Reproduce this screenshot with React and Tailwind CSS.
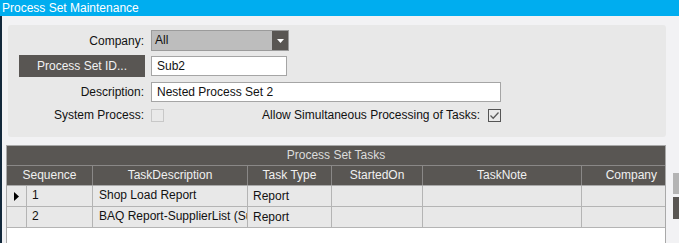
import React from "react";

const cols = [
  { key: "seq", w: "w-[66px]" },
  { key: "desc", w: "w-[155px]" },
  { key: "type", w: "w-[84px]" },
  { key: "started", w: "w-[91px]" },
  { key: "note", w: "w-[159px]" },
  { key: "company", w: "w-[83px]" },
];

const rows = [
  { seq: "1", desc: "Shop Load Report", type: "Report", current: true },
  { seq: "2", desc: "BAQ Report-SupplierList (Supplier List)", type: "Report" },
];

const CheckBox = ({ checked }) => (
  <div
    className={`w-[13px] h-[13px] bg-[#e9e9e9] border ${
      checked ? "border-[#555555]" : "border-[#c8c8c8]"
    } flex items-center justify-center`}
  >
    {checked && (
      <svg width="11" height="11" viewBox="0 0 11 11">
        <path d="M1.5 5.5 L4.2 8.2 L9.5 2.5" fill="none" stroke="#5a5a5a" strokeWidth="1.3" />
      </svg>
    )}
  </div>
);

const FormPanel = () => (
  <div className="w-[658px] h-[112px] bg-[#e8e8e8] rounded-[3px] pl-[11px] pt-[5px] flex flex-col">
    <div className="flex items-center h-[21px]">
      <div className="w-[126px] text-right pr-[1px]">Company:</div>
      <div className="ml-[6px] w-[138px] h-[21px] bg-[#bdbdbd] border border-[#9b9b9b] flex">
        <div className="flex-1 pl-[3px] leading-[19px]">All</div>
        <div className="w-[16px] h-full bg-[#595653] flex items-center justify-center">
          <svg width="7" height="4" viewBox="0 0 7 4">
            <path d="M0 0 H7 L3.5 4 Z" fill="#ffffff" />
          </svg>
        </div>
      </div>
    </div>
    <div className="flex items-center h-[22px] mt-[4px]">
      <div className="w-[126px] h-[22px] bg-[#595653] text-[#f2f2f2] flex items-center justify-center">
        Process Set ID...
      </div>
      <div className="ml-[6px] w-[136px] h-[20px] bg-white border border-[#a5a5a5] pl-[5px] leading-[18px]">
        Sub2
      </div>
    </div>
    <div className="flex items-center h-[20px] mt-[5px]">
      <div className="w-[126px] text-right pr-[1px]">Description:</div>
      <div className="ml-[6px] w-[350px] h-[20px] bg-white border border-[#a5a5a5] pl-[5px] leading-[18px]">
        Nested Process Set 2
      </div>
    </div>
    <div className="flex items-center h-[14px] mt-[6px]">
      <div className="w-[126px] text-right pr-[1px]">System Process:</div>
      <div className="ml-[6px]">
        <CheckBox />
      </div>
      <div className="w-[316px] text-right">Allow Simultaneous Processing of Tasks:</div>
      <div className="ml-[8px]">
        <CheckBox checked />
      </div>
    </div>
  </div>
);

const Grid = () => (
  <div className="w-[660px] h-[98px] border border-[#a9a9a9] border-b-0 bg-white flex flex-col overflow-hidden">
    <div className="h-[20px] bg-[#595653] text-[#dcdcdc] text-center leading-[19px] border-b border-[#8a8887]">
      Process Set Tasks
    </div>
    <div className="h-[20px] bg-[#595653] text-[#f0f0f0] flex leading-[19px] border-b border-[#a9a9a9]">
      <div className="w-[86px] text-center border-r border-[#8a8887]">Sequence</div>
      <div className="w-[155px] text-center border-r border-[#8a8887]">TaskDescription</div>
      <div className="w-[84px] text-center border-r border-[#8a8887]">Task Type</div>
      <div className="w-[91px] text-center border-r border-[#8a8887]">StartedOn</div>
      <div className="w-[159px] text-center border-r border-[#8a8887]">TaskNote</div>
      <div className="flex-1 text-right pr-[8px]">Company</div>
    </div>
    {rows.map((r) => (
      <div key={r.seq} className="h-[21px] flex bg-[#e8e8e8] border-b border-[#b4b4b4] leading-[18px]">
        <div className="w-[20px] border-r border-[#b4b4b4] flex items-center justify-center">
          {r.current && (
            <svg width="5" height="9" viewBox="0 0 5 9">
              <path d="M0 0 L5 4.5 L0 9 Z" fill="#000000" />
            </svg>
          )}
        </div>
        <div className="w-[66px] border-r border-[#b4b4b4] pl-[5px]">{r.seq}</div>
        <div className="w-[155px] border-r border-[#b4b4b4] pl-[6px] whitespace-nowrap overflow-hidden">
          {r.desc}
        </div>
        <div className="w-[84px] border-r border-[#b4b4b4] pl-[5px] leading-[20px]">{r.type}</div>
        <div className="w-[91px] border-r border-[#b4b4b4]" />
        <div className="w-[159px] border-r border-[#b4b4b4]" />
        <div className="flex-1" />
      </div>
    ))}
  </div>
);

export default function App() {
  return (
    <div
      className="w-[679px] h-[243px] overflow-hidden bg-[#f2f2f4] text-[12px] text-[#111111] flex flex-col"
      style={{ fontFamily: '"Liberation Sans", Arial, sans-serif' }}
    >
      <div className="h-[16px] bg-[#00adef] text-white pl-[2px] leading-[16px] shrink-0">
        Process Set Maintenance
      </div>
      <div className="flex flex-1">
        <div className="w-[2px] bg-[#12283b]" />
        <div className="flex flex-col">
          <div className="ml-[6px] mt-[9px]">
            <FormPanel />
          </div>
          <div className="flex mt-[8px] ml-[4px]">
            <Grid />
            <div className="ml-[7px] mt-[28px] flex flex-col">
              <div className="w-[6px] h-[21px] bg-[#b4b4b4]" />
              <div className="w-[6px] h-[22px] bg-[#595653] mt-[3px]" />
            </div>
          </div>
        </div>
      </div>
    </div>
  );
}
